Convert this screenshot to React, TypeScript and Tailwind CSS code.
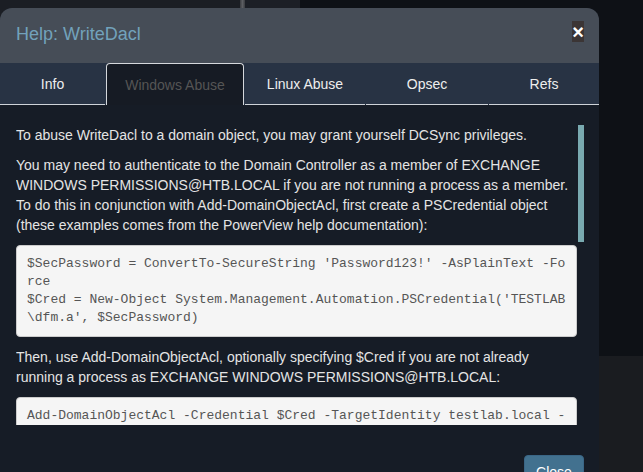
import React from "react";

const tabs = [
  { label: "Info", cls: "w-[105px]", active: false },
  { label: "Windows Abuse", cls: "w-[138px]", active: true },
  { label: "Linux Abuse", cls: "w-[120px]", active: false },
  { label: "Opsec", cls: "w-[122px]", active: false },
  { label: "Refs", cls: "w-[110px]", active: false },
];

const code1 = `$SecPassword = ConvertTo-SecureString 'Password123!' -AsPlainText -Fo
rce
$Cred = New-Object System.Management.Automation.PSCredential('TESTLAB
\\dfm.a', $SecPassword)`;

const code2 = `Add-DomainObjectAcl -Credential $Cred -TargetIdentity testlab.local -
Rights DCSync`;

export default function App() {
  return (
    <div
      className="relative w-[643px] h-[472px] overflow-hidden bg-[#0e1116]"
      style={{ fontFamily: '"Liberation Sans", Arial, sans-serif' }}
    >
      {/* page behind the modal */}
      <div className="flex h-[356px]">
        <div className="w-[240px] h-[24px] bg-[#1b1e24]" />
        <div className="w-[5px] h-[24px] bg-gradient-to-r from-[#3a3c40] via-[#5c5e62] to-[#3a3c40]" />
        <div className="w-[55px] h-[24px] bg-[#1c1f26]" />
      </div>
      <div className="flex justify-end h-[116px]">
        <div className="w-[44px] bg-[#1a1c20]" />
      </div>

      {/* modal */}
      <div className="absolute left-0 top-[8px] w-[599px] h-[520px] rounded-t-[12px] overflow-hidden bg-[#161c26] flex flex-col">
        <div className="h-[55px] bg-[#464d57] flex items-start justify-between pl-[16px] pr-[15px]">
          <h4 className="mt-[13px] text-[18px] leading-[26px] text-[#72a2bb]">Help: WriteDacl</h4>
          <div className="mt-[13px] w-[12px] h-[21px] bg-[#3b3535] flex items-center justify-center text-white font-bold text-[20px] leading-none">
            ×
          </div>
        </div>

        <div className="h-[42px] bg-[#283344] flex gap-px">
          {tabs.map((t) =>
            t.active ? (
              <div
                key={t.label}
                className={`${t.cls} h-[42px] pt-[2px] border border-b-0 border-[#d5d8dc] rounded-t-[4px] bg-[#161b24] flex items-center justify-center text-[14px] text-[#555]`}
              >
                {t.label}
              </div>
            ) : (
              <div
                key={t.label}
                className={`${t.cls} h-[42px] pt-[2px] border-b border-[#cfd3d8] flex items-center justify-center text-[14px] text-[#eee]`}
              >
                {t.label}
              </div>
            )
          )}
        </div>

        <div className="pt-[20px] pl-[16px]">
          <div className="relative w-[568px] h-[300px] overflow-hidden">
            <div className="w-[561px] text-[14px] leading-[20px] text-[#e4e4e4]">
              <p className="mb-[10px]">
                To abuse WriteDacl to a domain object, you may grant yourself DCSync privileges.
              </p>
              <p className="mb-[10px]">
                You may need to authenticate to the Domain Controller as a member of EXCHANGE WINDOWS
                PERMISSIONS@HTB.LOCAL if you are not running a process as a member. To do this in
                conjunction with Add-DomainObjectAcl, first create a PSCredential object (these
                examples comes from the PowerView help documentation):
              </p>
              <pre
                className="mb-[10px] px-[10px] py-[9px] border border-[#ccc] rounded-[4px] bg-[#f5f5f5] text-[#555] text-[13px] leading-[18px] whitespace-pre"
                style={{ fontFamily: '"Liberation Mono", "Courier New", monospace' }}
              >
                {code1}
              </pre>
              <p className="mb-[10px]">
                Then, use Add-DomainObjectAcl, optionally specifying $Cred if you are not already
                running a process as EXCHANGE WINDOWS PERMISSIONS@HTB.LOCAL:
              </p>
              <pre
                className="mb-[10px] px-[10px] py-[9px] border border-[#ccc] rounded-[4px] bg-[#f5f5f5] text-[#555] text-[13px] leading-[18px] whitespace-pre"
                style={{ fontFamily: '"Liberation Mono", "Courier New", monospace' }}
              >
                {code2}
              </pre>
              <p className="mb-[10px]">
                Once you have granted yourself this privilege, you may use the mimikatz dcsync
                function to dcsync the password of arbitrary principals on the domain
              </p>
            </div>
            <div className="absolute right-0 top-0 w-[6px] h-[117px] bg-[#79aab0]" />
          </div>
        </div>

        <div className="flex justify-end pr-[15px] pt-[30px]">
          <button className="w-[60px] h-[34px] rounded-[4px] bg-[#42718f] border border-[#3a6686] text-white text-[14px] leading-[20px]">
            Close
          </button>
        </div>
      </div>
    </div>
  );
}
